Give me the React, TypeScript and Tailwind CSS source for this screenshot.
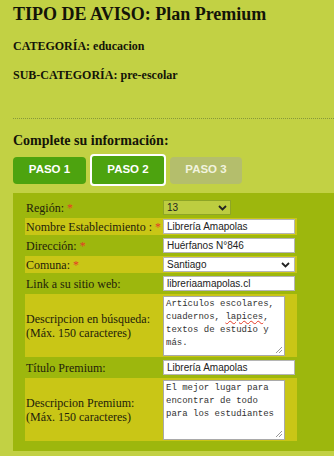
import type { ReactNode } from 'react'

const serif = "font-['Liberation_Serif','Times_New_Roman',serif]"

function Chevron() {
  return (
    <svg width="9" height="6" viewBox="0 0 9 6" className="shrink-0">
      <path d="M1 1 L4.5 4.5 L8 1" fill="none" stroke="#222" strokeWidth="1.8" />
    </svg>
  )
}

function Grip() {
  return (
    <svg width="8" height="8" viewBox="0 0 8 8" className="absolute right-[1px] bottom-[1px]">
      <path d="M7 1 L1 7 M7 4 L4 7" stroke="#999" strokeWidth="1" />
    </svg>
  )
}

function Req() {
  return <span className="text-[#e53a26]"> *</span>
}

function Row({ label, hl, tall, children }: { label: ReactNode; hl?: boolean; tall?: boolean; children: ReactNode }) {
  return (
    <div
      className={`flex items-center w-[272px] ${tall ? 'h-[63px]' : 'h-[17px]'} ${hl ? 'bg-[#c9c616]' : ''}`}
    >
      <div className={`w-[138px] pl-[1px] text-[12px] leading-[14px] text-[#23220a] ${serif}`}>{label}</div>
      <div className="flex-1 flex items-center">{children}</div>
    </div>
  )
}

function TextInput({ value }: { value: string }) {
  return (
    <div className="w-[132px] h-[15px] bg-white border border-[#b5b5b5] px-[3px] flex items-center text-[10px] text-[#222] font-['Liberation_Sans',Arial,sans-serif]">
      {value}
    </div>
  )
}

function Area({ lines }: { lines: ReactNode[] }) {
  return (
    <div className="relative w-[122px] h-[60px] bg-white border border-[#a9a9a9] px-[2px] pt-[1px] text-[9px] leading-[13px] text-[#333] font-['Liberation_Mono','Courier_New',monospace] whitespace-pre">
      {lines.map((l, i) => (
        <div key={i}>{l}</div>
      ))}
      <Grip />
    </div>
  )
}

export default function App() {
  return (
    <div className={`min-h-screen bg-[#c2d144] text-[#141408] overflow-hidden ${serif}`}>
      <div className="pl-[13px] pt-[2px] pb-[10px]">
        <h1 className="text-[18px] leading-[24px] font-bold">TIPO DE AVISO: Plan Premium</h1>
        <p className="mt-[12px] text-[12px] leading-[16px] font-bold">CATEGORÍA: educacion</p>
        <p className="mt-[13px] text-[12px] leading-[16px] font-bold">SUB-CATEGORÍA: pre-escolar</p>

        <div className="mt-[35px] border-t border-dotted border-[#87993a]" />

        <h2 className="mt-[13px] text-[14px] leading-[18px] font-bold">Complete su información:</h2>

        {/* Pasos */}
        <div className="mt-[4px] flex items-center gap-[4px] font-['Liberation_Sans',Arial,sans-serif] font-bold text-[11.5px]">
          <div className="w-[73px] h-[27px] rounded-[4px] bg-[#4da30f] text-white flex items-center justify-center">
            PASO 1
          </div>
          <div className="w-[76px] h-[32px] rounded-[4px] bg-[#4da30f] border-2 border-white text-white flex items-center justify-center">
            PASO 2
          </div>
          <div className="w-[72px] h-[27px] rounded-[4px] bg-[#b4be6c] text-[#f1f3de] flex items-center justify-center">
            PASO 3
          </div>
        </div>

        {/* Formulario */}
        <div className="mt-[7px] bg-[#9db70d] pl-[12px] pt-[6px] pb-[10px] flex flex-col gap-[2px]">
          <Row label={<>Región:<Req /></>}>
            <div className="w-[68px] h-[15px] bg-[#bdcd40] border border-[#8ea526] pl-[3px] pr-[3px] flex items-center justify-between text-[10px] text-[#222] font-['Liberation_Sans',Arial,sans-serif]">
              13
              <Chevron />
            </div>
          </Row>
          <Row hl label={<>Nombre Establecimiento :<Req /></>}>
            <TextInput value="Librería Amapolas" />
          </Row>
          <Row label={<>Dirección:<Req /></>}>
            <TextInput value="Huérfanos N°846" />
          </Row>
          <Row hl label={<>Comuna:<Req /></>}>
            <div className="w-[132px] h-[15px] bg-white border border-[#b5b5b5] pl-[3px] pr-[4px] flex items-center justify-between text-[10px] text-[#222] font-['Liberation_Sans',Arial,sans-serif]">
              Santiago
              <Chevron />
            </div>
          </Row>
          <Row label="Link a su sitio web:">
            <TextInput value="libreriaamapolas.cl" />
          </Row>
          <Row hl tall label={<>Descripcion en búsqueda:<br />(Máx. 150 caracteres)</>}>
            <Area
              lines={[
                'Artículos escolares,',
                <>
                  cuadernos,{' '}
                  <span className="underline decoration-wavy decoration-[#e53a26] decoration-1">lapices</span>,
                </>,
                'textos de estudio y',
                'más.',
              ]}
            />
          </Row>
          <Row label="Título Premium:">
            <TextInput value="Librería Amapolas" />
          </Row>
          <Row hl tall label={<>Descripcion Premium:<br />(Máx. 150 caracteres)</>}>
            <Area lines={['El mejor lugar para', 'encontrar de todo', 'para los estudiantes']} />
          </Row>
        </div>
      </div>
    </div>
  )
}
